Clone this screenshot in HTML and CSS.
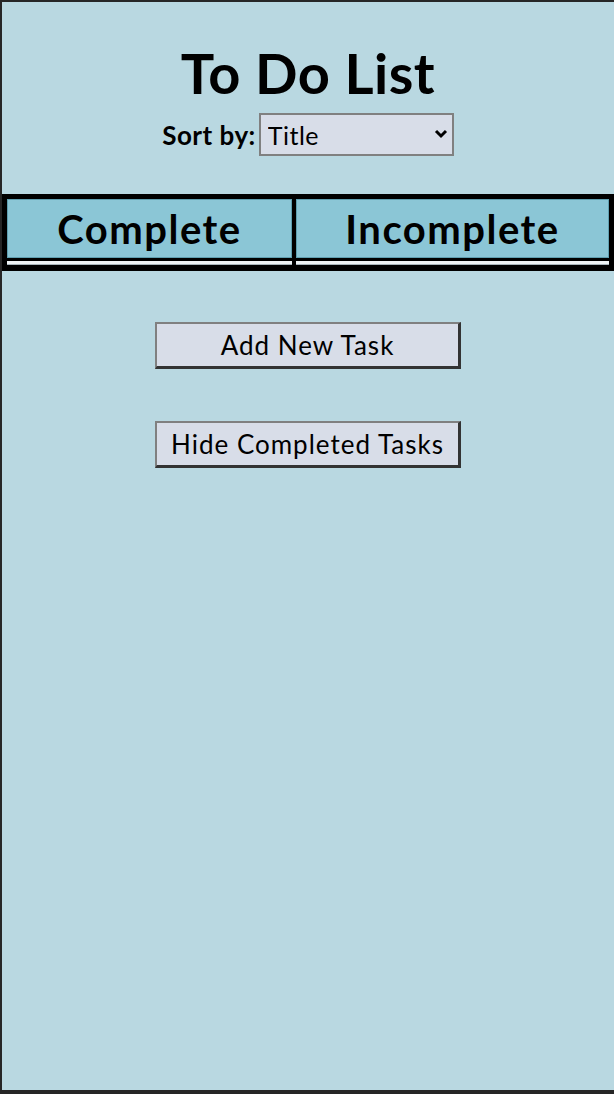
FILE: index.html
```html
<!DOCTYPE html>
<html lang="en">
<head>
  <meta charset="UTF-8" />
  <meta name="viewport" content="width=device-width, initial-scale=1.0"/>
  <title>To Do List</title>
  <link rel="stylesheet" href="styles.css">
</head>
<body>
  <div class="page">
    <header class="top">
      <h1>To Do List</h1>
      <div class="sort-row">
        <label for="sort">Sort by:</label>
        <div class="select-wrap">
          <select id="sort">
            <option>Title</option>
            <option>Due Date</option>
            <option>Priority</option>
          </select>
          <svg class="chevron" width="14" height="10" viewBox="0 0 14 10">
            <path d="M2 2 L7 7 L12 2" fill="none" stroke="#000" stroke-width="3"/>
          </svg>
        </div>
      </div>
    </header>

    <table class="tasks">
      <thead>
        <tr>
          <th class="col-complete">Complete</th>
          <th>Incomplete</th>
        </tr>
      </thead>
      <tbody>
        <tr>
          <td></td>
          <td></td>
        </tr>
      </tbody>
    </table>

    <div class="actions">
      <button class="btn">Add New Task</button>
      <button class="btn">Hide Completed Tasks</button>
    </div>
  </div>
</body>
</html>
```

FILE: styles.css
```css
html, body {
  margin: 0;
  padding: 0;
  height: 100%;
}

body {
  font-family: 'Lato', 'Noto Sans', sans-serif;
  background-color: #262626;
  color: #000;
}

.page {
  box-sizing: border-box;
  height: 1094px;
  background-color: #b9d8e1;
  border-left: 2px solid #262626;
  border-top: 2px solid #262626;
  border-bottom: 4px solid #262626;
}

.top {
  text-align: center;
  padding-top: 41px;
}

h1 {
  margin: 0;
  font-size: 56px;
  line-height: 60px;
  font-weight: 700;
  letter-spacing: 0.5px;
}

.sort-row {
  display: flex;
  justify-content: center;
  align-items: center;
  margin-top: 10px;
}

.sort-row label {
  font-size: 26px;
  font-weight: 700;
  letter-spacing: 0.5px;
  padding-right: 3px;
}

.select-wrap {
  position: relative;
}

.select-wrap select {
  appearance: none;
  -webkit-appearance: none;
  width: 195px;
  height: 43px;
  margin: 0;
  padding: 0 0 0 7px;
  background-color: #d8dde8;
  border: 2px solid #808080;
  border-radius: 0;
  font-family: inherit;
  font-size: 25px;
  font-weight: 400;
  letter-spacing: 0.5px;
  color: #000;
}

.chevron {
  position: absolute;
  right: 6px;
  top: 16px;
  pointer-events: none;
}

.tasks {
  width: 100%;
  margin-top: 38px;
  background-color: #000;
  border: solid #000;
  border-width: 2px 1px 3px;
  border-spacing: 4px 3px;
}

.tasks th {
  height: 57px;
  padding: 0;
  background-color: #8bc6d6;
  border: 1px solid #5f9fb0;
  font-size: 40px;
  font-weight: 700;
  letter-spacing: 1.5px;
}

.tasks th.col-complete {
  width: 283px;
}

.tasks td {
  height: 3px;
  padding: 0;
  background-color: #eef3f5;
  border-bottom: 1px solid #a8b4ba;
}

.actions {
  display: flex;
  flex-direction: column;
  align-items: center;
  gap: 52px;
  padding-top: 51px;
}

.btn {
  box-sizing: border-box;
  width: 306px;
  height: 47px;
  padding: 0;
  background-color: #d8dde8;
  border-style: solid;
  border-width: 2px 3px 3px 2px;
  border-color: #808080 #333 #333 #808080;
  font-family: inherit;
  font-size: 26px;
  font-weight: 400;
  letter-spacing: 1px;
  color: #000;
  cursor: pointer;
}
```
